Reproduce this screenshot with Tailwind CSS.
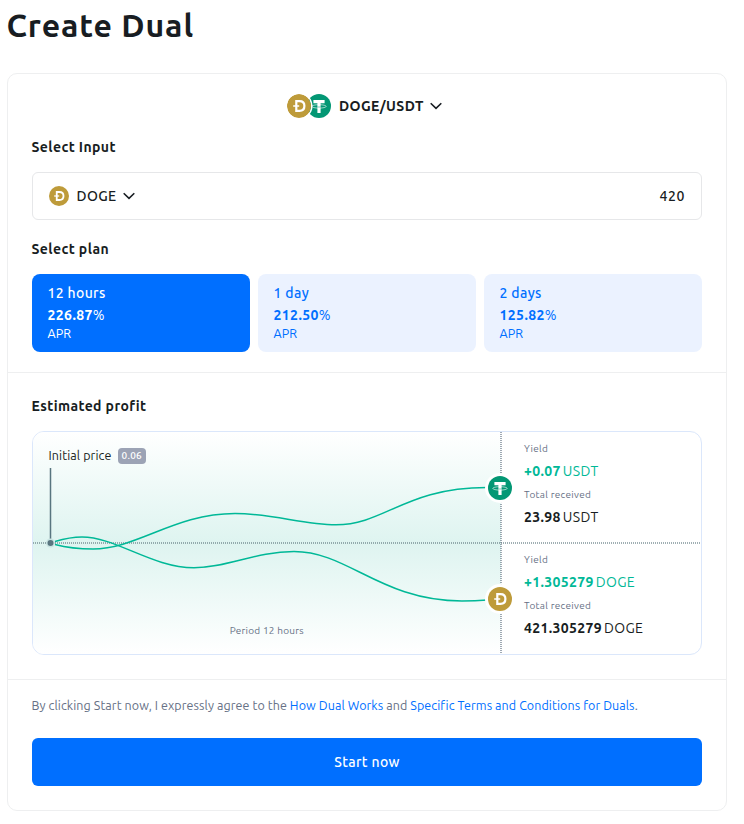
<!DOCTYPE html>
<html lang="en">
<head>
  <meta charset="utf-8">
  <meta name="viewport" content="width=device-width, initial-scale=1">
  <title>Create Dual</title>
  <script src="https://cdn.jsdelivr.net/npm/@tailwindcss/browser@4"></script>
</head>
<body class="bg-white text-[#181d22] font-[Ubuntu,'Noto_Sans',sans-serif] text-sm tracking-[0.4px] -indent-[0.5px]">

<!-- Coin icons -->
<svg class="hidden">
  <symbol id="doge" viewBox="0 0 24 24">
    <circle cx="12" cy="12" r="12" fill="#be9b3a"/>
    <path d="M9.3 7.2h3.2c3.200 0 4.900 1.800 4.900 4.800s-1.700 4.800-4.900 4.800H9.300z" fill="none" stroke="#fff" stroke-width="2.2"/>
    <path d="M6.200 12h6" stroke="#fff" stroke-width="1.5"/>
  </symbol>
  <symbol id="usdt" viewBox="0 0 24 24">
    <circle cx="12" cy="12" r="12" fill="#039774"/>
    <path d="M6.4 6h11.2v3.3h-4V19h-3.2V9.3h-4z" fill="#fff"/>
    <ellipse cx="12" cy="12.4" rx="7.2" ry="1.7" fill="none" stroke="#fff" stroke-width=".6"/>
    <path d="M10.4 13h3.2" stroke="#039774" stroke-width=".5"/>
  </symbol>
</svg>

<div class="w-[720px] ml-[7px]">
  <h1 class="h-[73px] pt-[3px] text-[32px] leading-[44px] font-bold tracking-[0.9px]">Create Dual</h1>

  <div class="h-[738px] border border-[#eeeff0] rounded-[10px]">
    <!-- Form -->
    <div class="h-[299px] px-6 pt-5 border-b border-[#eeeff0]">
      <div class="flex items-center h-6 pl-[255px]">
        <svg class="size-6 relative z-10 rounded-full ring-[1.5px] ring-white"><use href="#doge"/></svg>
        <svg class="size-6 -ml-1"><use href="#usdt"/></svg>
        <span class="ml-2 font-semibold indent-0">DOGE/USDT</span>
        <svg class="ml-1.5 w-3 h-2" viewBox="0 0 12 8" fill="none" stroke="#181d22" stroke-width="1.6"><path d="M.7 1.2 6 6.4l5.3-5.2"/></svg>
      </div>

      <h2 class="mt-[19px] leading-5 font-semibold">Select Input</h2>
      <div class="mt-[15px] h-12 flex items-center border border-[#e6e7e9] rounded-md px-4">
        <svg class="size-5"><use href="#doge"/></svg>
        <span class="ml-2 font-medium">DOGE</span>
        <svg class="ml-1.5 w-3 h-2" viewBox="0 0 12 8" fill="none" stroke="#181d22" stroke-width="1.6"><path d="M.7 1.2 6 6.4l5.3-5.2"/></svg>
        <span class="ml-auto font-medium tracking-[0.6px]">420</span>
      </div>

      <h2 class="mt-[19px] leading-5 font-semibold">Select plan</h2>
      <div class="mt-[15px] grid grid-cols-3 gap-2 text-[#006fff]">
        <div class="h-[78px] px-4 pt-2 rounded-lg bg-[#006fff] text-white">
          <div class="leading-[22px] font-medium tracking-wide">12 hours</div>
          <div class="leading-[22px]"><b class="font-semibold">226.87</b>%</div>
          <div class="-mt-px text-[12.5px] leading-4 tracking-[0.1px]">APR</div>
        </div>
        <div class="h-[78px] px-4 pt-2 rounded-lg bg-[#ebf2ff]">
          <div class="leading-[22px] font-medium tracking-wide">1 day</div>
          <div class="leading-[22px]"><b class="font-semibold">212.50</b>%</div>
          <div class="-mt-px text-[12.5px] leading-4 tracking-[0.1px]">APR</div>
        </div>
        <div class="h-[78px] px-4 pt-2 rounded-lg bg-[#ebf2ff]">
          <div class="leading-[22px] font-medium tracking-wide">2 days</div>
          <div class="leading-[22px]"><b class="font-semibold">125.82</b>%</div>
          <div class="-mt-px text-[12.5px] leading-4 tracking-[0.1px]">APR</div>
        </div>
      </div>
    </div>

    <!-- Estimated profit -->
    <div class="h-[307px] px-6 pt-[23px] border-b border-[#eeeff0]">
      <h2 class="leading-5 font-semibold">Estimated profit</h2>
      <div class="relative mt-[15px] h-[224px] flex border border-[#dbe7fb] rounded-xl overflow-hidden">
        <svg class="absolute inset-0 w-[668px] h-[222px]" viewBox="0 0 668 222" fill="none">
          <defs>
            <linearGradient id="glow" x1="0" y1="0" x2="0" y2="1">
              <stop offset="0" stop-color="#fff"/>
              <stop offset=".5" stop-color="#def4f0"/>
              <stop offset="1" stop-color="#fff"/>
            </linearGradient>
          </defs>
          <path d="M0 0h468v222H0z" fill="url(#glow)"/>
          <path d="M0 111h668" stroke="#607a80" stroke-opacity=".6" stroke-width="2" stroke-dasharray="1 1"/>
          <path d="M468 0v222" stroke="#607080" stroke-opacity=".6" stroke-width="2" stroke-dasharray="1 1"/>
          <path d="M17.5 36v71" stroke="#58757f" stroke-width="1.5"/>
          <circle cx="17.5" cy="111" r="4.5" fill="#c9e4e2"/>
          <circle cx="17.5" cy="111" r="3" fill="#58757f"/>
          <g stroke="#00b897" stroke-width="1.5">
            <path d="M22 112.5C37 116.5 47 117 60 117C104 117 142 81.5 202 81.5C240 81.5 270 92.7 303 92.7C352 92.7 372 55.5 454 55.5"/>
            <path d="M22 109.5C32 106.5 40 105 49 105C83 105 119 135.7 161 135.7C195 135.7 222 119.5 261 119.5C315 119.5 348 169 429 169C438 169 446 168.7 454 168"/>
          </g>
          <circle cx="467" cy="56" r="15" fill="#fff"/>
          <circle cx="467" cy="167" r="15" fill="#fff"/>
          <use href="#usdt" x="455" y="44" width="24" height="24"/>
          <use href="#doge" x="455" y="155" width="24" height="24"/>
        </svg>

        <div class="relative w-[468px] flex flex-col justify-between pt-4 pb-[15px]">
          <div class="flex items-center h-4 pl-4">
            <span class="w-[63px] text-[12.5px] tracking-[0.1px] whitespace-nowrap">Initial price</span>
            <span class="ml-1.5 w-7 h-4 rounded bg-[#9ca3b5] text-white text-center text-[10px] leading-4 font-medium tracking-wide">0.06</span>
          </div>
          <div class="text-center text-[10px] leading-4 tracking-wide text-[#667085]">Period 12 hours</div>
        </div>

        <div class="relative pl-[23px] indent-0">
          <div class="h-[111px] pt-[9px]">
            <div class="text-[10px] leading-4 tracking-[0.3px] text-[#667085]">Yield</div>
            <div class="mt-[3px] flex gap-0.5 leading-[22px] tracking-wide text-[#00b897]"><b class="font-semibold">+0.07</b><span>USDT</span></div>
            <div class="mt-[5px] text-[10px] leading-4 tracking-[0.3px] text-[#667085]">Total received</div>
            <div class="mt-[3px] flex gap-0.5 leading-[22px] tracking-wide"><b class="font-semibold">23.98</b><span>USDT</span></div>
          </div>
          <div class="h-[111px] pt-[9px]">
            <div class="text-[10px] leading-4 tracking-[0.3px] text-[#667085]">Yield</div>
            <div class="mt-[3px] flex gap-0.5 leading-[22px] tracking-wide text-[#00b897]"><b class="font-semibold">+1.305279</b><span>DOGE</span></div>
            <div class="mt-[5px] text-[10px] leading-4 tracking-[0.3px] text-[#667085]">Total received</div>
            <div class="mt-[3px] flex gap-0.5 leading-[22px] tracking-wide"><b class="font-semibold">421.305279</b><span>DOGE</span></div>
          </div>
        </div>
      </div>
    </div>

    <!-- Submit -->
    <div class="px-6 pt-[15px]">
      <p class="text-[12.5px] leading-5 tracking-[0.08px] text-[#667085]">By clicking Start now, I expressly agree to the <a class="text-[#006fff]">How Dual Works</a> and <a class="text-[#006fff]">Specific Terms and Conditions for Duals</a>.</p>
      <button class="mt-[23px] w-full h-12 rounded-md bg-[#006fff] text-white font-medium tracking-wide">Start now</button>
    </div>
  </div>
</div>

</body>
</html>
